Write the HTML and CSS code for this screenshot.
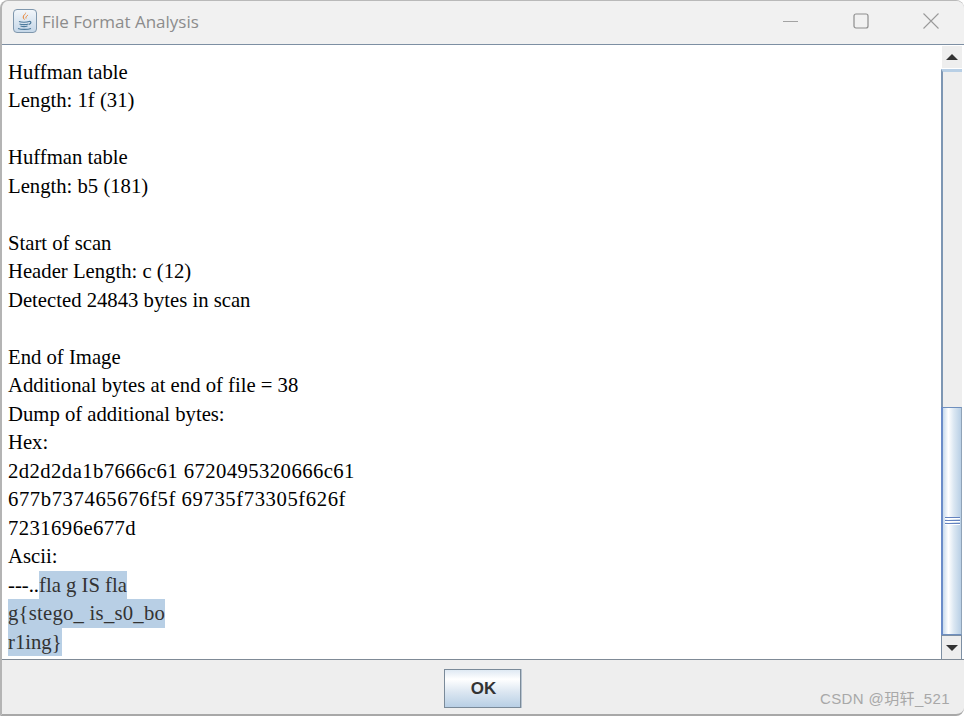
FILE: index.html
```html
<!DOCTYPE html>
<html lang="en">
<head>
  <meta charset="UTF-8" />
  <title>File Format Analysis</title>
  <link rel="stylesheet" href="styles.css">
</head>
<body>
  <div class="window">
    <div class="titlebar">
      <div class="app-icon">
        <svg width="24" height="24" viewBox="0 0 24 24">
          <path d="M13 3c1 2-3 3-2 6 .3 1 1 1.500 1 2-1-.6-3-2-2-4 .6-1.500 2.500-2 3-4z" fill="#e8873a"/>
          <path d="M15 6c-1 1-2.500 1.500-2 3.500" fill="none" stroke="#e8873a" stroke-width="1"/>
          <path d="M6 12.500c2 1 8 1 10 0M6.500 15c2 .8 7 .8 9 0M7.500 17c2 .6 5 .6 7 0" fill="none" stroke="#4d7a9c" stroke-width="1.200"/>
          <path d="M16 12.500c2-.5 3 1.500 0 3M5 19.500c3 1.200 10 1.200 13 0" fill="none" stroke="#4d7a9c" stroke-width="1.200"/>
        </svg>
      </div>
      <span class="title">File Format Analysis</span>
      <div class="controls">
        <svg class="ctl" width="16" height="16" viewBox="0 0 16 16"><path d="M0 8.500h15" stroke="#a3a3a3" fill="none"/></svg>
        <svg class="ctl" width="16" height="16" viewBox="0 0 16 16"><rect x="1" y="1" width="14" height="14" rx="2" stroke="#8e8e8e" fill="none" stroke-width="1.200"/></svg>
        <svg class="ctl" width="16" height="16" viewBox="0 0 16 16"><path d="M.5.5l15 15M15.500.5l-15 15" stroke="#9a9a9a" fill="none" stroke-width="1.100"/></svg>
      </div>
    </div>

    <div class="content">
      <div class="text-area">
        <div class="line">Huffman table</div>
        <div class="line">Length: 1f (31)</div>
        <div class="line">&nbsp;</div>
        <div class="line">Huffman table</div>
        <div class="line">Length: b5 (181)</div>
        <div class="line">&nbsp;</div>
        <div class="line">Start of scan</div>
        <div class="line">Header Length: c (12)</div>
        <div class="line">Detected 24843 bytes in scan</div>
        <div class="line">&nbsp;</div>
        <div class="line">End of Image</div>
        <div class="line">Additional bytes at end of file = 38</div>
        <div class="line">Dump of additional bytes:</div>
        <div class="line">Hex:</div>
        <div class="line hex">2d2d2da1b7666c61 6720495320666c61</div>
        <div class="line hex wide">677b737465676f5f 69735f73305f626f</div>
        <div class="line hex">7231696e677d</div>
        <div class="line">Ascii:</div>
        <div class="line">---..<span class="sel">fla g IS fla</span></div>
        <div class="line"><span class="sel loose">g{stego_ is_s0_bo</span></div>
        <div class="line"><span class="sel">r1ing}</span></div>
      </div>
      <div class="scrollbar">
        <div class="arrow-btn"><span class="tri up"></span></div>
        <div class="track">
          <div class="thumb">
            <div class="grip"><i></i><i></i><i></i></div>
          </div>
        </div>
        <div class="arrow-btn down"><span class="tri dn"></span></div>
      </div>
    </div>

    <div class="footer">
      <button class="ok-btn">OK</button>
      <span class="watermark">CSDN @玥轩_521</span>
    </div>
  </div>
</body>
</html>
```

FILE: styles.css
```css
* {
  margin: 0; padding: 0; box-sizing: border-box;
}
html, body {
  height: 100%;
  overflow: hidden;
  background: #fff;
}

/* Ventana */
.window {
  height: 716px;
  width: 964px;
  display: flex;
  flex-direction: column;
  background: #eeeeee;
  border-top: 1px solid #b9b9b9;
  border-left: 2px solid #b4b4b4;
  border-bottom: 2px solid #a8a8a8;
  border-radius: 8px 8px 8px 0;
}

/* Barra de titulo */
.titlebar {
  height: 44px;
  flex: none;
  display: flex;
  align-items: center;
  padding: 0 0 3px 11px;
  background: #f1f1f1;
  border-radius: 8px 8px 0 0;
  border-bottom: 1px solid #7d8fa3;
  font-family: "Open Sans", "Noto Sans", sans-serif;
}
.app-icon {
  width: 24px;
  height: 24px;
  border: 1px solid #7f97ad;
  border-radius: 4px;
  background: linear-gradient(to bottom, #f2f6fa, #c5d7e8);
}
.app-icon svg { display: block; margin: -1px; }
.title {
  margin-left: 5px;
  font-size: 17px;
  color: #8c8c8c;
}
.controls {
  margin-left: auto;
  display: flex;
  gap: 54px;
  padding-right: 25px;
}
.ctl { display: block; }

/* Contenido */
.content {
  height: 615px;
  flex: none;
  display: flex;
  background: #fff;
  border-bottom: 1px solid #7f8a96;
}
.text-area {
  flex: 1;
  padding: 12.6px 0 0 6px;
  font-family: "Liberation Serif", "Times New Roman", serif;
  font-size: 20.7px;
  color: #000;
  overflow: hidden;
}
.line {
  height: 28.5px;
  line-height: 28.5px;
  white-space: pre;
}
.hex { letter-spacing: 0.43px; }
.hex.wide { letter-spacing: 0.58px; }
.sel {
  display: inline-block;
  background: #b8cfe5;
  color: #333;
}
.sel.loose { letter-spacing: 0.24px; }

/* Barra de desplazamiento */
.scrollbar {
  width: 21px;
  margin-right: 2px;
  flex: none;
  display: flex;
  flex-direction: column;
  background: #eeeeee;
}
.arrow-btn {
  height: 24px;
  flex: none;
  display: flex;
  align-items: center;
  justify-content: center;
  background: #eeeeee;
  border: 1px solid #fff;
  border-right: 0;
}
.arrow-btn.down {
  border: 1px solid #7d8fa3;
  border-top: 1px solid #7d8fa3;
  border-bottom: 0;
}
.tri {
  width: 0;
  height: 0;
  border-left: 6px solid transparent;
  border-right: 6px solid transparent;
}
.tri.up { border-bottom: 6px solid #333; }
.tri.dn { border-top: 6px solid #333; }
.track {
  flex: 1;
  min-height: 0;
  display: flex;
  flex-direction: column;
  justify-content: flex-end;
  border-left: 2px solid #7d96b3;
  border-top: 3px solid #b8cfe5;
}
.thumb {
  height: 228px;
  display: flex;
  align-items: center;
  justify-content: center;
  background: linear-gradient(to right, #c8daec 0%, #ffffff 30%, #dbe7f2 60%, #b8cfe5 100%);
  border: 1px solid #6f8fbe;
  border-left: 0;
  border-right-color: #8fa3b8;
  box-shadow: -2px 0 0 #6a8cc9;
}
.grip { width: 15px; }
.grip i {
  display: block;
  height: 1px;
  margin-bottom: 2px;
  background: #6382bf;
  box-shadow: 0 1px 0 #fff;
}

/* Pie */
.footer {
  flex: 1;
  min-height: 0;
  display: flex;
  justify-content: center;
  position: relative;
  padding: 9px 2px 0 0;
}
.ok-btn {
  width: 77px;
  height: 39px;
  padding-left: 3px;
  font-family: "Liberation Sans", Arial, sans-serif;
  font-weight: bold;
  font-size: 17px;
  color: #333;
  background: linear-gradient(to bottom, #dfe9f3 0%, #ffffff 25%, #dbe6f1 60%, #b8cfe5 100%);
  border: 1px solid #7a8a99;
  box-shadow: 1px 0 0 #b8c4d0;
}
.watermark {
  position: absolute;
  right: 14px;
  bottom: 6px;
  font-family: "Liberation Sans", "Noto Sans CJK SC", sans-serif;
  font-size: 15px;
  letter-spacing: 0.4px;
  color: #a8a8a8;
}
```
